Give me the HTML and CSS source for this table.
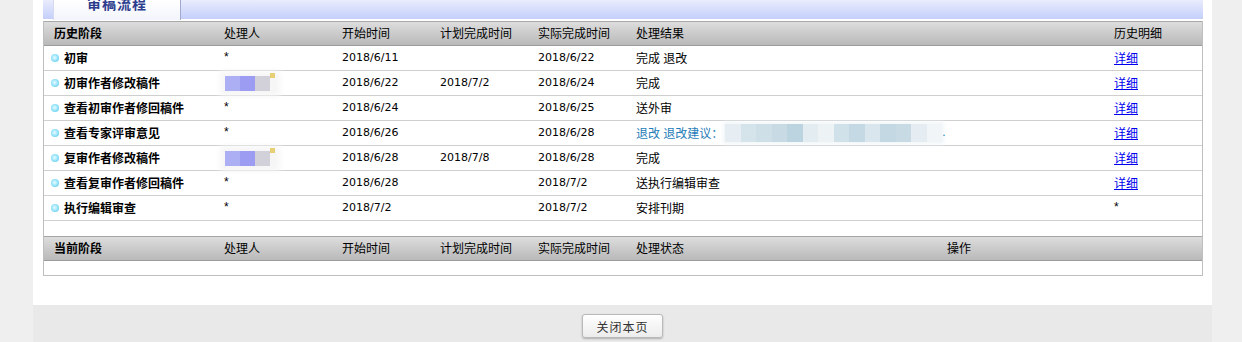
FILE: index.html
```html
<!DOCTYPE html>
<html lang="zh-CN">
<head>
<meta charset="utf-8">
<title>审稿流程</title>
<link rel="stylesheet" href="styles.css">
</head>
<body>
<div class="page">
  <div class="main">
    <div class="band">
      <div class="tab"><span class="tab-text">审稿流程</span></div>
    </div>
    <div class="box">
      <div class="row head">
        <div class="c b">历史阶段</div>
        <div class="c">处理人</div>
        <div class="c">开始时间</div>
        <div class="c">计划完成时间</div>
        <div class="c">实际完成时间</div>
        <div class="c">处理结果</div>
        <div class="c">历史明细</div>
      </div>
      <div class="row">
        <div class="c b stage"><i class="dot"></i>初审</div>
        <div class="c">*</div>
        <div class="c dt">2018/6/11</div>
        <div class="c dt"></div>
        <div class="c dt">2018/6/22</div>
        <div class="c">完成 退改</div>
        <div class="c"><a href="#">详细</a></div>
      </div>
      <div class="row">
        <div class="c b stage"><i class="dot"></i>初审作者修改稿件</div>
        <div class="c"><span class="mask"><i class="m1"></i><i class="m2"></i><i class="m3"></i><i class="mk"></i></span></div>
        <div class="c dt">2018/6/22</div>
        <div class="c dt">2018/7/2</div>
        <div class="c dt">2018/6/24</div>
        <div class="c">完成</div>
        <div class="c"><a href="#">详细</a></div>
      </div>
      <div class="row">
        <div class="c b stage"><i class="dot"></i>查看初审作者修回稿件</div>
        <div class="c">*</div>
        <div class="c dt">2018/6/24</div>
        <div class="c dt"></div>
        <div class="c dt">2018/6/25</div>
        <div class="c">送外审</div>
        <div class="c"><a href="#">详细</a></div>
      </div>
      <div class="row">
        <div class="c b stage"><i class="dot"></i>查看专家评审意见</div>
        <div class="c">*</div>
        <div class="c dt">2018/6/26</div>
        <div class="c dt"></div>
        <div class="c dt">2018/6/28</div>
        <div class="c back">退改 退改建议：<span class="smear"><i style="background:#e6eef3"></i><i style="background:#d5e3eb"></i><i style="background:#cfdfe8"></i><i style="background:#c8dbe5"></i><i style="background:#bcd3e0"></i><i style="background:#e3ecf1"></i><i style="background:#edf2f5"></i><i style="background:#d1e1e9"></i><i style="background:#c5d9e4"></i><i style="background:#d9e6ed"></i><i style="background:#c3d8e3"></i><i style="background:#c8dbe5"></i><i style="background:#e5edf2"></i><i style="background:#f1f5f7"></i></span>.</div>
        <div class="c"><a href="#">详细</a></div>
      </div>
      <div class="row">
        <div class="c b stage"><i class="dot"></i>复审作者修改稿件</div>
        <div class="c"><span class="mask"><i class="m1"></i><i class="m2"></i><i class="m3"></i><i class="mk"></i></span></div>
        <div class="c dt">2018/6/28</div>
        <div class="c dt">2018/7/8</div>
        <div class="c dt">2018/6/28</div>
        <div class="c">完成</div>
        <div class="c"><a href="#">详细</a></div>
      </div>
      <div class="row">
        <div class="c b stage"><i class="dot"></i>查看复审作者修回稿件</div>
        <div class="c">*</div>
        <div class="c dt">2018/6/28</div>
        <div class="c dt"></div>
        <div class="c dt">2018/7/2</div>
        <div class="c">送执行编辑审查</div>
        <div class="c"><a href="#">详细</a></div>
      </div>
      <div class="row">
        <div class="c b stage"><i class="dot"></i>执行编辑审查</div>
        <div class="c">*</div>
        <div class="c dt">2018/7/2</div>
        <div class="c dt"></div>
        <div class="c dt">2018/7/2</div>
        <div class="c">安排刊期</div>
        <div class="c">*</div>
      </div>
      <div class="spacer"></div>
      <div class="row head head2 cur">
        <div class="c b">当前阶段</div>
        <div class="c">处理人</div>
        <div class="c">开始时间</div>
        <div class="c">计划完成时间</div>
        <div class="c">实际完成时间</div>
        <div class="c">处理状态</div>
        <div class="c">操作</div>
      </div>
      <div class="empty"></div>
    </div>
  </div>
  <div class="foot">
    <button class="btn" type="button">关闭本页</button>
  </div>
</div>
</body>
</html>
```

FILE: styles.css
```css
html, body {
  margin: 0;
  padding: 0;
}
body {
  background: #efefef;
  font-family: "Liberation Sans", "Noto Sans CJK SC", sans-serif;
  font-size: 12px;
  color: #000;
}
.page {
  width: 1179px;
  margin-left: 33px;
}
.main {
  background: #fff;
  height: 305px;
  padding: 0 10px;
  box-sizing: border-box;
}
.band {
  width: 1160px;
  height: 19px;
  background: linear-gradient(#e9ecfc, #c4cffb);
  display: flex;
  padding-left: 10px;
  box-sizing: border-box;
}
.tab {
  width: 128px;
  height: 20px;
  box-sizing: border-box;
  background: linear-gradient(#ffffff, #f3f5fc);
  border-left: 1px solid #d4daf2;
  border-right: 1px solid #a3aacb;
  overflow: hidden;
  text-align: center;
}
.tab-text {
  display: block;
  margin-top: -5px;
  font-size: 14px;
  line-height: 18px;
  font-weight: bold;
  color: #2d3d8e;
  letter-spacing: 1px;
}
.box {
  margin-top: 2px;
  width: 1160px;
  box-sizing: border-box;
  border: 1px solid #bfbfbf;
  border-top: none;
}
.row {
  display: grid;
  grid-template-columns: 170px 118px 98px 98px 98px 478px 98px;
  height: 25px;
  box-sizing: border-box;
  border-bottom: 1px solid #cfcfcf;
}
.row.cur {
  grid-template-columns: 170px 118px 98px 98px 98px 311px 265px;
}
.head {
  height: 25px;
  border-top: 1px solid #a8a8a8;
  border-bottom: 1px solid #9c9c9c;
  background: linear-gradient(#dddddd, #b9b9b9);
}
.c {
  padding-left: 10px;
  padding-bottom: 2px;
  display: flex;
  align-items: center;
  white-space: nowrap;
  overflow: visible;
}
.b {
  font-weight: bold;
}
.stage {
  padding-left: 7px;
}
.dot {
  display: inline-block;
  width: 8px;
  height: 8px;
  border-radius: 50%;
  margin-right: 5px;
  margin-top: 2px;
  background: radial-gradient(circle at 45% 45%, #e8fbff 0%, #9ee6fb 45%, #42bfe6 100%);
}
.dt {
  font-family: "DejaVu Sans", sans-serif;
  font-size: 11px;
}
a {
  color: #0000ee;
  text-decoration: underline;
}
.back {
  color: #1f7db9;
}
.mask {
  display: flex;
  height: 15px;
  align-items: stretch;
  box-shadow: 0 0 6px 5px #f6f6f6;
  background: #f6f6f6;
  margin-left: 1px;
  margin-top: 2px;
}
.mask i {
  display: block;
  width: 15px;
}
.mask .m1 { background: #adaff4; }
.mask .m2 { background: #9b9cf2; }
.mask .m3 { background: #d2d1d9; }
.mask .mk {
  width: 5px;
  height: 5px;
  margin-top: -3px;
  background: #e6cf75;
}
.smear {
  display: flex;
  height: 18px;
  margin-left: 2px;
  margin-top: 2px;
  box-shadow: 0 0 4px 2px #f2f6f8;
}
.smear i {
  display: block;
  width: 15.5px;
}
.spacer {
  height: 15px;
}
.head2 {
  border-top: 1px solid #a6a6a6;
}
.empty {
  height: 14px;
}
.foot {
  background: #e9e9e9;
  height: 37px;
  display: flex;
  justify-content: center;
  padding-top: 9px;
  box-sizing: border-box;
}
.btn {
  width: 81px;
  height: 24px;
  border: 1px solid #b9b9b9;
  border-radius: 3px;
  background: linear-gradient(#ffffff, #ececec);
  box-shadow: 0 1px 2px rgba(0,0,0,0.25);
  font-family: "Liberation Sans", "Noto Sans CJK SC", sans-serif;
  font-size: 12px;
  color: #333;
  padding: 0;
  letter-spacing: 1px;
}
```
